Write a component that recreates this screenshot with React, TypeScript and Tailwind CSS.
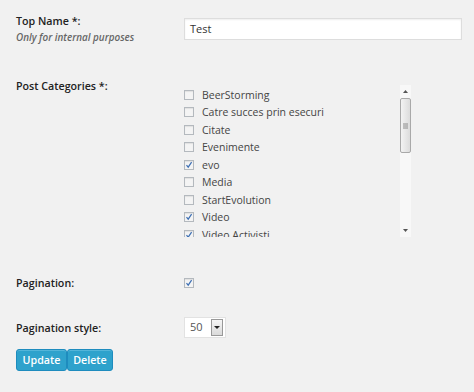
import React from 'react';

const categories = [
  { name: 'BeerStorming', checked: false },
  { name: 'Catre succes prin esecuri', checked: false },
  { name: 'Citate', checked: false },
  { name: 'Evenimente', checked: false },
  { name: 'evo', checked: true },
  { name: 'Media', checked: false },
  { name: 'StartEvolution', checked: false },
  { name: 'Video', checked: true },
  { name: 'Video Activisti', checked: true },
];

function Box({ checked }: { checked: boolean }) {
  return (
    <span className="flex h-[10px] w-[10px] shrink-0 items-center justify-center border border-[#b4b9be] bg-[#f4f4f4] shadow-[inset_0_1px_1px_rgba(0,0,0,0.08)]">
      {checked && (
        <svg width="8" height="8" viewBox="0 0 8 8">
          <path d="M1.5 4.2 L3.2 6.2 L6.6 1.2" fill="none" stroke="#3d6fb3" strokeWidth="1.2" />
        </svg>
      )}
    </span>
  );
}

export default function App() {
  return (
    <div
      className="h-[392px] w-[474px] bg-[#f1f1f1] text-[10.7px] text-[#222]"
      style={{ fontFamily: '"Open Sans", sans-serif' }}
    >
      <div className="pl-4 pt-[13px]">
        {/* top name */}
        <div className="flex">
          <div className="w-[168px]">
            <div className="font-semibold leading-[16px]">Top Name *:</div>
            <div className="mt-[1px] text-[9.9px] font-semibold italic leading-[14px] text-[#666]">
              Only for internal purposes
            </div>
          </div>
          <div className="mt-[5px] flex h-[22px] w-[278px] items-center border border-[#ddd] bg-white px-[5px] text-[11px] text-[#333] shadow-[inset_0_1px_2px_rgba(0,0,0,0.07)]">
            Test
          </div>
        </div>

        {/* categories */}
        <div className="mt-[34px] flex">
          <div className="w-[168px] font-semibold leading-[16px]">Post Categories *:</div>
          <div className="mt-[7px] flex h-[152px] w-[227px] overflow-hidden">
            <div className="flex-1 pt-[1px]">
              {categories.map((c) => (
                <div key={c.name} className="flex h-[17.5px] items-center gap-[8px] text-[10.5px] text-[#444]">
                  <Box checked={c.checked} />
                  <span className="leading-[16px]">{c.name}</span>
                </div>
              ))}
            </div>
            <div className="flex w-[11px] flex-col items-center bg-[#f8f8f8]">
              <div className="flex h-[13px] items-center">
                <svg width="5" height="3" viewBox="0 0 5 3">
                  <path d="M0 3 L2.5 0 L5 3 Z" fill="#555" />
                </svg>
              </div>
              <div className="flex h-[55px] w-[11px] items-center justify-center rounded-[2px] border border-[#a9a9a9] bg-gradient-to-r from-[#f3f3f3] to-[#dcdcdc]">
                <svg width="5" height="6" viewBox="0 0 5 6">
                  <path d="M0 1 H5 M0 3 H5 M0 5 H5" stroke="#777" strokeWidth="0.8" />
                </svg>
              </div>
              <div className="flex-1" />
              <div className="flex h-[14px] items-center">
                <svg width="5" height="3" viewBox="0 0 5 3">
                  <path d="M0 0 L2.5 3 L5 0 Z" fill="#555" />
                </svg>
              </div>
            </div>
          </div>
        </div>

        {/* pagination */}
        <div className="mt-[38px] flex items-center">
          <div className="w-[168px] font-semibold leading-[16px]">Pagination:</div>
          <Box checked />
        </div>

        {/* pagination style */}
        <div className="mt-[26px] flex items-center">
          <div className="w-[168px] font-semibold leading-[16px]">Pagination style:</div>
          <div className="flex h-[21px] w-[42px] items-center justify-between border border-[#e2e2e2] bg-white pl-[5px] pr-[2px] text-[11px] text-[#555]">
            <span>50</span>
            <span className="flex h-[17px] w-[12px] items-center justify-center border border-[#999] bg-gradient-to-b from-[#f5f5f5] to-[#dadada]">
              <svg width="6" height="3" viewBox="0 0 6 3">
                <path d="M0 0 L3 3 L6 0 Z" fill="#222" />
              </svg>
            </span>
          </div>
        </div>

        {/* buttons */}
        <div className="mt-[11px] flex">
          <button className="h-[22px] w-[51px] rounded-[3px] border border-[#1e8cbe] bg-[#2ea2cc] text-[10.7px] font-semibold leading-none text-white shadow-[inset_0_1px_0_rgba(120,200,230,0.5)]">
            Update
          </button>
          <button className="h-[22px] w-[46px] rounded-[3px] border border-[#1e8cbe] bg-[#2ea2cc] text-[10.7px] font-semibold leading-none text-white shadow-[inset_0_1px_0_rgba(120,200,230,0.5)]">
            Delete
          </button>
        </div>
      </div>
    </div>
  );
}
